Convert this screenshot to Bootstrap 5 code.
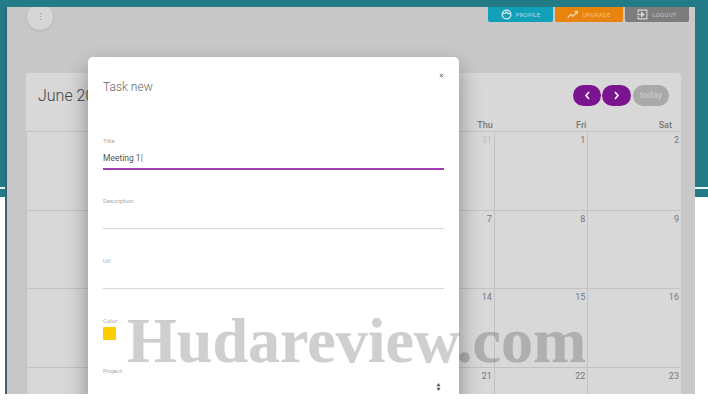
<!DOCTYPE html>
<html>
<head>
    <title>Task new</title>
    <link href="https://cdn.jsdelivr.net/npm/bootstrap@5.3.0/dist/css/bootstrap.min.css" rel="stylesheet">
    <style>
        html, body { width: 708px; height: 402px; overflow: hidden; background: #fff; }
        body { font-family: Roboto, "Liberation Sans", sans-serif; }
        .stage { position: relative; width: 708px; height: 402px; padding-top: 7px;
            background: linear-gradient(#237b88 0 187px, #e9f3f4 187px 189px, #237b88 189px 197px, #fff 197px); }
        .shell { position: relative; height: 387px; margin: 0 13px 0 5px; border-left: 2px solid #3b5f75; background: #c8c8c8; overflow: hidden; }
        .topbar { height: 66px; padding: 0 6px 0 20px; }
        .round-menu { width: 26px; height: 26px; margin-top: -3px; border-radius: 50%; background: #d6d6d6; color: #888; font-size: 9px; line-height: 26px; text-align: center; box-shadow: 0 1px 3px rgba(0,0,0,.12); }
        .top-btn { height: 15px; padding: 0; gap: 4px; border-radius: 0 0 2px 2px; font-size: 6px; letter-spacing: .2px; text-transform: uppercase; color: #b5dbe3; }
        .top-btn svg { width: 11px; height: 11px; flex: none; }
        .tb-profile { width: 65px; background: #12a0b9; }
        .tb-upgrade { width: 68px; margin-left: 2px; background: #e8830c; color: #eec690; }
        .tb-logout { width: 64px; margin-left: 2px; background: #7d7d7d; color: #c4c4c4; }
        .cal-card { margin: 0 14px 0 19px; background: #d8d8d8; border: 0; border-radius: 3px 3px 0 0; }
        .cal-tools { flex: none; height: 44px; padding: 12px 12px 0 12px; }
        .cal-title { font-size: 16px; font-weight: 300; color: #444; line-height: 21px; margin: 0; }
        .cal-btn { height: 21px; padding: 0; border: 0; border-radius: 11px; background: #7b1490; color: #fff; width: 28px; }
        .cal-next { margin-left: 1px; width: 29px; }
        .cal-btn svg { width: 7px; height: 9px; }
        .cal-today { width: 36px; margin-left: 2px; background: #a9a9a9; color: #c8c8c8; font-size: 9px; font-weight: 500; }
        .cal-grid { display: grid; grid-template-columns: repeat(7, 1fr); }
        .dow { height: 15px; font-size: 9px; font-weight: 500; line-height: 16px; color: #777; text-align: right; padding-right: 1px; border-bottom: 1px solid #c2c2c2; }
        .dow:nth-child(7) { padding-right: 9px; }
        .day { height: 78.7px; padding: 3px 2px 0 0; font-size: 9px; line-height: 11px; color: #777; text-align: right; border-bottom: 1px solid #c2c2c2; border-left: 1px solid #c2c2c2; }
        .day-off { color: #bdbdbd; }
        .task-modal { position: absolute; top: 50px; left: 81px; width: 371px; height: 400px; border: 0; border-radius: 5px; background: #fff; box-shadow: 0 10px 22px rgba(0,0,0,.38); }
        .task-head { height: 79px; padding: 16px 15px 0; border: 0; align-items: flex-start; }
        .task-title { margin: 7px 0 0; font-size: 12px; line-height: 14px; font-weight: 300; color: #666; }
        .task-head .btn-close { font-size: 5px; margin: 0; padding: 0; opacity: .6; }
        .task-body { padding: 0 15px; }
        .field { height: 60px; }
        .field-color { height: 50px; }
        .field-label { display: block; margin: 0; height: 10px; font-size: 6px; line-height: 10px; color: #a9a9a9; }
        .line-input { height: 23px; padding: 2px 0 0; border: 0; border-bottom: 1px solid #d5d5d5; border-radius: 0; font-size: 8.5px; color: #555; background-color: transparent; box-shadow: none; }
        .line-active { height: 24px; border-bottom: 2px solid #a23cb4; }
        .swatch { width: 13px; height: 13px; margin-top: 1px; background: #fc0; border-radius: 1px; }
        .line-select { --bs-form-select-bg-img: url("data:image/svg+xml,%3csvg xmlns='http://www.w3.org/2000/svg' viewBox='0 0 6 10'%3e%3cpath fill='%23555' d='M3 0l2.5 4h-5zM3 10L.5 6h5z'/%3e%3c/svg%3e"); background-position: right 3px center; background-size: 5px 8px; }
        .brand-mark { position: absolute; left: 127px; top: 309px; font-family: "Liberation Serif", serif; font-weight: 700; font-size: 64px; line-height: 64px; color: rgba(0,0,0,.19); -webkit-text-stroke: 1.2px rgba(0,0,0,.03); white-space: nowrap; }
    </style>
</head>
<body>
<div class="stage">
    <div class="shell">
        <div class="topbar d-flex justify-content-between align-items-start">
            <div class="round-menu">&#8942;</div>
            <div class="d-flex">
                <a class="top-btn tb-profile d-flex align-items-center justify-content-center text-decoration-none">
                    <svg viewBox="0 0 12 12" fill="none" stroke="#d5e8ec" stroke-width="1.4"><circle cx="6" cy="6" r="4.8"/><path d="M1.6 5c2 .4 3.4-.3 4.4-1.6 1 1.3 2.6 2 4.4 1.6"/></svg>
                    <span>Profile</span>
                </a>
                <a class="top-btn tb-upgrade d-flex align-items-center justify-content-center text-decoration-none">
                    <svg viewBox="0 0 12 12" fill="none" stroke="#f2d6ae" stroke-width="1.4"><path d="M.8 9.5l3.4-3.6 2.2 2L11 3"/><path d="M8 2.6h3.2v3"/></svg>
                    <span>Upgrade</span>
                </a>
                <a class="top-btn tb-logout d-flex align-items-center justify-content-center text-decoration-none">
                    <svg viewBox="0 0 12 12" fill="none" stroke="#d6d6d6" stroke-width="1.2"><path d="M1.2 4V1.2h9.6v9.6H1.2V8"/><path d="M0 6h6.5" stroke-width="1.4"/><path d="M5 3.8L7.6 6 5 8.2z" fill="#d6d6d6"/></svg>
                    <span>Logout</span>
                </a>
            </div>
        </div>

        <div class="card cal-card">
            <div class="cal-tools d-flex justify-content-between align-items-start">
                <h2 class="cal-title">June 2018</h2>
                <div class="d-flex">
                    <button class="btn cal-btn d-flex align-items-center justify-content-center"><svg viewBox="0 0 7 9" fill="none" stroke="#fff" stroke-width="1.6"><path d="M5 1L2 4.5 5 8"/></svg></button>
                    <button class="btn cal-btn cal-next d-flex align-items-center justify-content-center"><svg viewBox="0 0 7 9" fill="none" stroke="#fff" stroke-width="1.6"><path d="M2 1l3 3.5L2 8"/></svg></button>
                    <button class="btn cal-btn cal-today">today</button>
                </div>
            </div>
            <div class="cal-grid" id="cal"></div>
        </div>

        <div class="modal-content task-modal">
            <div class="modal-header task-head justify-content-between">
                <h5 class="task-title">Task new</h5>
                <button type="button" class="btn-close" aria-label="Close"></button>
            </div>
            <div class="modal-body task-body">
                <div class="field">
                    <label class="field-label">Title</label>
                    <input class="form-control line-input line-active" value="Meeting 1|">
                </div>
                <div class="field">
                    <label class="field-label">Description</label>
                    <input class="form-control line-input">
                </div>
                <div class="field">
                    <label class="field-label">Url</label>
                    <input class="form-control line-input">
                </div>
                <div class="field field-color">
                    <label class="field-label">Color</label>
                    <div class="swatch"></div>
                </div>
                <div class="field">
                    <label class="field-label">Project</label>
                    <select class="form-select line-input line-select"><option></option></select>
                </div>
            </div>
        </div>
    </div>
    <div class="brand-mark">Hudareview.com</div>
</div>
<script src="https://cdn.jsdelivr.net/npm/bootstrap@5.3.0/dist/js/bootstrap.bundle.min.js"></script>
<script>
    // month grid, the first four columns sit behind the modal so they stay empty
    const names = ['', '', '', '', 'Thu', 'Fri', 'Sat'];
    let html = names.map(n => `<div class="dow">${n}</div>`).join('');
    for (let i = 0; i < 28; i++) {
        const off = i < 5;
        const num = off ? 27 + i : i - 4;
        html += `<div class="day${off ? ' day-off' : ''}">${i % 7 < 4 ? '' : num}</div>`;
    }
    document.getElementById('cal').innerHTML = html;
</script>
</body>
</html>
